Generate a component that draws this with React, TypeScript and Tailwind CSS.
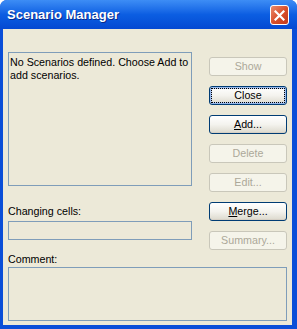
import type { ReactNode } from 'react';

const font = { fontFamily: '"Liberation Sans", Arial, sans-serif' };

function XpButton({
  children,
  disabled = false,
  isDefault = false,
}: {
  children: ReactNode;
  disabled?: boolean;
  isDefault?: boolean;
}) {
  if (disabled) {
    return (
      <button
        disabled
        className="h-[19px] w-[78px] rounded-[3px] border border-[#c9c7ba] bg-[#f5f4ea] text-[10.7px] leading-none text-[#aca899]"
      >
        {children}
      </button>
    );
  }
  return (
    <button
      className={`h-[19px] w-[78px] rounded-[3px] border border-[#003c74] bg-gradient-to-b from-white via-[#f4f3ee] to-[#dcd9cd] p-[1px] text-[10.7px] leading-none text-black ${
        isDefault ? 'shadow-[inset_0_0_0_1px_#98b8ea,inset_0_0_0_2px_#bcd0f3]' : 'shadow-[inset_0_-1px_0_#d6d0c5]'
      }`}
    >
      {isDefault ? (
        <span className="flex h-full w-full items-center justify-center border border-dotted border-black">
          {children}
        </span>
      ) : (
        <span className="flex h-full w-full items-center justify-center">{children}</span>
      )}
    </button>
  );
}

export default function App() {
  return (
    <div className="h-[329px] w-[297px] overflow-hidden bg-white" style={font}>
      <div className="flex h-full flex-col rounded-t-[7px] bg-[#0a4ed8]">
        {/* Title bar */}
        <div className="relative flex h-[29px] shrink-0 items-center rounded-t-[7px] bg-gradient-to-b from-[#3d8df5] via-[#0c5ee2] to-[#0549d2] pl-[7px]">
          <span
            className="text-[13px] font-bold text-white [text-shadow:1px_1px_0_#0a2a8a]"
            style={{ fontFamily: '"Liberation Sans", Arial, sans-serif' }}
          >
            Scenario Manager
          </span>
          <div className="absolute left-[270px] top-[5px] flex h-[20px] w-[19px] items-center justify-center rounded-[3px] border border-white bg-gradient-to-br from-[#e98a6c] via-[#d9502c] to-[#c2381a]">
            <svg width="11" height="11" viewBox="0 0 11 11">
              <path d="M1.5 1.5 L9.5 9.5 M9.5 1.5 L1.5 9.5" stroke="white" strokeWidth="2.2" strokeLinecap="square" />
            </svg>
          </div>
        </div>

        {/* Body */}
        <div className="ml-[3px] mr-[5px] mb-[4px] flex flex-1 flex-col bg-[#ece9d8] px-[5px] text-[10.7px] text-black">
          <div className="flex justify-between">
            <div className="flex w-[184px] flex-col pt-[23px]">
              <div className="h-[134px] border border-[#7f9db9] bg-[#ece9d8] px-[1px] pt-[3px] leading-[13px]">
                No Scenarios defined. Choose Add to add scenarios.
              </div>
              <div className="mt-[19px] leading-[13px]">Changing cells:</div>
              <div className="mt-[3px] h-[19px] border border-[#7f9db9] bg-[#ece9d8]" />
            </div>
            <div className="flex flex-col gap-[10px] pt-[28px]">
              <XpButton disabled>Show</XpButton>
              <XpButton isDefault>Close</XpButton>
              <XpButton>
                <span>
                  <span className="underline">A</span>dd...
                </span>
              </XpButton>
              <XpButton disabled>Delete</XpButton>
              <XpButton disabled>Edit...</XpButton>
              <XpButton>
                <span>
                  <span className="underline">M</span>erge...
                </span>
              </XpButton>
              <XpButton disabled>Summary...</XpButton>
            </div>
          </div>
          <div className="mt-[3px] leading-[13px]">Comment:</div>
          <div className="mt-[1px] h-[54px] w-[279px] border border-[#7f9db9] bg-[#ece9d8]" />
        </div>
      </div>
    </div>
  );
}
